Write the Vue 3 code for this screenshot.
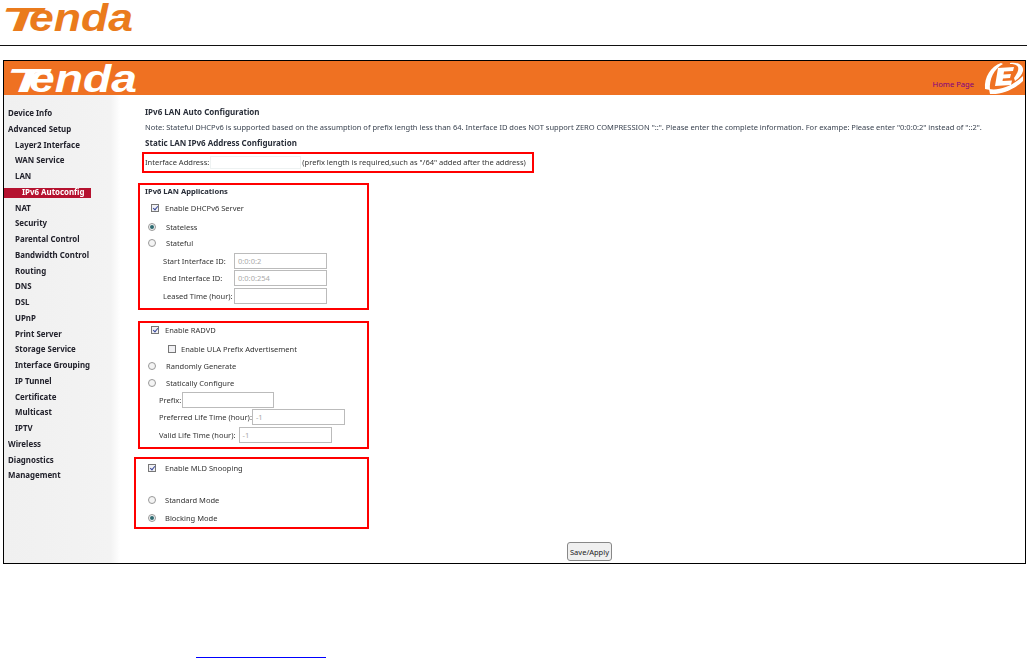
<script setup>
const navItems = [
  { label: 'Device Info', level: 0 },
  { label: 'Advanced Setup', level: 0 },
  { label: 'Layer2 Interface', level: 1 },
  { label: 'WAN Service', level: 1 },
  { label: 'LAN', level: 1 },
  { label: 'IPv6 Autoconfig', level: 2, active: true },
  { label: 'NAT', level: 1 },
  { label: 'Security', level: 1 },
  { label: 'Parental Control', level: 1 },
  { label: 'Bandwidth Control', level: 1 },
  { label: 'Routing', level: 1 },
  { label: 'DNS', level: 1 },
  { label: 'DSL', level: 1 },
  { label: 'UPnP', level: 1 },
  { label: 'Print Server', level: 1 },
  { label: 'Storage Service', level: 1 },
  { label: 'Interface Grouping', level: 1 },
  { label: 'IP Tunnel', level: 1 },
  { label: 'Certificate', level: 1 },
  { label: 'Multicast', level: 1 },
  { label: 'IPTV', level: 1 },
  { label: 'Wireless', level: 0 },
  { label: 'Diagnostics', level: 0 },
  { label: 'Management', level: 0 }
]
</script>

<template>
  <div class="page">
    <header class="doc-head">
      <svg class="logo" width="136" height="34" viewBox="0 0 136 34">
        <text class="logo-text" y="31" fill="#ea7b1c"><tspan x="1" font-size="33" textLength="40" lengthAdjust="spacingAndGlyphs">T</tspan><tspan x="29" font-size="39" textLength="104" lengthAdjust="spacingAndGlyphs">enda</tspan></text>
      </svg>
    </header>

    <section class="frame">
      <div class="banner">
        <svg class="logo" width="136" height="34" viewBox="0 0 136 34">
          <text class="logo-text" y="31" fill="#fff"><tspan x="2" font-size="33" textLength="41" lengthAdjust="spacingAndGlyphs">T</tspan><tspan x="25" font-size="38" textLength="108" lengthAdjust="spacingAndGlyphs">enda</tspan></text>
        </svg>
        <a class="home">Home Page</a>
        <svg class="e-logo" width="42" height="34" viewBox="0 0 42 34">
          <path d="M18 2 C8 5 1 16 2 28 L7 29 C6 18 11 8 20 3 Z" fill="#fff" />
          <path d="M27 2 C35 1 41 4 40 10 C39 14 35 18 32 20 L31 17 C34 13 36 9 35 6 C33 3 30 3 27 3 Z" fill="#fff" />
          <path d="M15 7 L31 6 L30 10 L21 10.5 L20.5 13.5 L28 13 L27 17 L20 17.5 L19.5 20 L29 19.5 L28 24 L12 25 Z" fill="#fff" />
          <path d="M6 28 C16 30 30 25 40 15 L40 20 C32 28 18 34 7 33 Z" fill="#fff" />
        </svg>
      </div>

      <div class="body">
        <nav class="side">
          <div
            v-for="item in navItems"
            :key="item.label"
            class="nav-item"
            :class="['lvl' + item.level, { active: item.active }]"
          >{{ item.label }}</div>
        </nav>

        <main class="main">
          <div class="line title">IPv6 LAN Auto Configuration</div>
          <div class="line note">Note: Stateful DHCPv6 is supported based on the assumption of prefix length less than 64. Interface ID does NOT support ZERO COMPRESSION "::". Please enter the complete information. For exampe: Please enter "0:0:0:2" instead of "::2".</div>
          <div class="line title">Static LAN IPv6 Address Configuration</div>

          <div class="red box-addr">
            <span class="soft">Interface Address:</span>
            <span class="field field-addr"></span>
            <span class="soft">(prefix length is required,such as "/64" added after the address)</span>
          </div>

          <div class="red box-apps">
            <div class="title apps-title soft">IPv6 LAN Applications</div>
            <div class="opt opt-check"><span class="check on"></span><span class="soft">Enable DHCPv6 Server</span></div>
            <div class="opt opt-radio r1"><span class="radio on"></span><span class="soft">Stateless</span></div>
            <div class="opt opt-radio r2"><span class="radio"></span><span class="soft">Stateful</span></div>
            <div class="frow fa first-row"><label class="l-apps soft">Start Interface ID:</label><span class="field f92 muted">0:0:0:2</span></div>
            <div class="frow fa"><label class="l-apps soft">End Interface ID:</label><span class="field f92 muted">0:0:0:254</span></div>
            <div class="frow fa"><label class="l-apps soft">Leased Time (hour):</label><span class="field f92"></span></div>
          </div>

          <div class="red box-radvd">
            <div class="opt opt-check first"><span class="check on"></span><span class="soft">Enable RADVD</span></div>
            <div class="opt opt-sub"><span class="check"></span><span class="soft">Enable ULA Prefix Advertisement</span></div>
            <div class="opt opt-radio r3"><span class="radio"></span><span class="soft">Randomly Generate</span></div>
            <div class="opt opt-radio r3"><span class="radio"></span><span class="soft">Statically Configure</span></div>
            <div class="frow fb first-b"><label class="soft">Prefix:</label><span class="field f91"></span></div>
            <div class="frow fb"><label class="soft l-pref">Preferred Life Time (hour):</label><span class="field f92 muted">-1</span></div>
            <div class="frow fb"><label class="soft l-valid">Valid Life Time (hour):</label><span class="field f92 muted">-1</span></div>
          </div>

          <div class="red box-mld">
            <div class="opt mld-check"><span class="check on"></span><span class="soft">Enable MLD Snooping</span></div>
            <div class="opt mld-radio m1"><span class="radio"></span><span class="soft">Standard Mode</span></div>
            <div class="opt mld-radio m2"><span class="radio on"></span><span class="soft">Blocking Mode</span></div>
          </div>

          <div class="actions"><button class="save" type="button">Save/Apply</button></div>
        </main>
      </div>
    </section>

    <div class="foot-rule"></div>
  </div>
</template>

<style>
html, body { margin: 0; background: #fff; overflow: hidden; }
</style>

<style scoped>
.page {
  width: 1027px;
  height: 658px;
  overflow: hidden;
  font-family: "Noto Sans", "DejaVu Sans", sans-serif;
  font-size: 7.52px;
  color: #333;
}
.soft, .line, .side { filter: blur(0.3px); }
.doc-head {
  height: 45px;
  border-bottom: 1px solid #111;
}
.logo {
  display: block;
  overflow: visible;
}
.logo-text {
  font-family: "Liberation Sans", sans-serif;
  font-style: italic;
  font-weight: 700;
}
.frame {
  margin: 14px 1px 0 3px;
  border: 1px solid #000;
  height: 502px;
  display: flex;
  flex-direction: column;
  overflow: hidden;
}
.banner {
  height: 34px;
  flex: none;
  background: #ef7122;
  position: relative;
}
.home {
  position: absolute;
  right: 51px;
  top: 18px;
  color: #800080;
  font-size: 7.6px;
}
.e-logo {
  position: absolute;
  right: 0;
  top: 0;
}
.body {
  flex: 1;
  display: flex;
  min-height: 0;
}
.side {
  width: 116px;
  flex: none;
  padding-top: 11px;
  background: linear-gradient(90deg, #f0f0f0 0, #f3f3f3 92%, #fff 100%);
  font-weight: 700;
  font-size: 7.9px;
  color: #22222c;
}
.nav-item {
  height: 15.75px;
  line-height: 15.75px;
  white-space: nowrap;
}
.lvl0 { padding-left: 4px; }
.lvl1 { padding-left: 11px; }
.lvl2 { padding-left: 18px; }
.active { position: relative; color: #fff; z-index: 0; }
.active::before {
  content: "";
  position: absolute;
  left: 0;
  top: 3px;
  width: 87px;
  height: 10px;
  background: #b5122f;
  z-index: -1;
}
.main {
  flex: 1;
  min-width: 0;
  padding: 9px 0 0 25px;
  position: relative;
}
.line {
  height: 15.5px;
  line-height: 15.5px;
  white-space: nowrap;
}
.title { font-weight: 700; font-size: 8px; color: #2a2f3a; }
.note { color: #3a4350; }
.red {
  border: 2px solid #f00;
  box-sizing: border-box;
}
.box-addr {
  width: 392px;
  height: 21px;
  margin: 1px 0 0 -3px;
  padding-left: 1px;
  display: flex;
  align-items: center;
  white-space: nowrap;
}
.field {
  display: inline-block;
  box-sizing: border-box;
  height: 16px;
  line-height: 14px;
  border: 1px solid #bbb;
  padding-left: 3px;
  background: #fff;
}
.muted { color: #aaa; }
.field-addr {
  width: 91px;
  height: 13px;
  margin: 0 1px 0 1px;
  border-color: #eef2f2;
}
.box-apps {
  width: 231px;
  height: 127px;
  margin: 10px 0 0 -7px;
  padding: 0 0 0 5px;
}
.apps-title { height: 12px; line-height: 12px; font-size: 7.6px; }
.opt {
  display: flex;
  align-items: center;
  white-space: nowrap;
}
.opt-check { height: 12px; margin: 5px 0 0 6px; }
.opt-check.first { margin-top: 0; }
.opt-radio { height: 12px; padding-left: 3px; }
.r1 { margin-top: 7px; }
.r2 { margin-top: 4px; }
.r3 { margin-top: 5px; }
.opt-sub { height: 12px; margin: 7px 0 0 23px; }
.check {
  width: 8px;
  height: 8px;
  box-sizing: border-box;
  border: 1px solid #777;
  background: #f1f1f4;
  margin-right: 6px;
  flex: none;
  position: relative;
}
.opt-sub .check { margin-right: 5px; }
.check.on::after {
  content: "";
  position: absolute;
  left: 1.5px;
  top: 0;
  width: 2px;
  height: 4px;
  border: solid #3a4a9a;
  border-width: 0 1.2px 1.2px 0;
  transform: rotate(40deg);
}
.radio {
  width: 8px;
  height: 8px;
  box-sizing: border-box;
  border: 1px solid #999;
  border-radius: 50%;
  background: #f4f4f4;
  margin-right: 10px;
  flex: none;
  position: relative;
}
.radio.on::after {
  content: "";
  position: absolute;
  left: 1px;
  top: 1px;
  width: 4px;
  height: 4px;
  border-radius: 50%;
  background: #2e6a70;
}
.frow {
  display: flex;
  align-items: center;
  white-space: nowrap;
}
.fa { height: 17px; padding-left: 18px; margin-top: 0.5px; }
.first-row { margin-top: 3.5px; }
.frow .l-apps { width: 71px; flex: none; margin-right: 0; }
.f92 { width: 93px; }
.f91 { width: 92px; }
.frow label { margin-right: 1px; }
.frow .l-pref { margin-right: 0; }
.frow .l-valid { margin-right: 3px; }
.box-radvd {
  width: 231px;
  height: 128px;
  margin: 11px 0 0 -7px;
  padding: 1px 0 0 5px;
}
.fb { height: 17px; padding-left: 14px; margin-top: 0.5px; }
.first-b { margin-top: 2.5px; }
.box-mld {
  width: 235px;
  height: 72px;
  margin: 8px 0 0 -11px;
  padding: 3px 0 0 12px;
}
.mld-check { height: 12px; }
.mld-radio { height: 12px; }
.m1 { margin-top: 20.5px; }
.m2 { margin-top: 5.5px; }
.mld-check .check { margin-right: 9px; }
.mld-radio .radio { margin-right: 9px; }
.actions {
  position: absolute;
  left: 447px;
  top: 447px;
}
.save {
  width: 45px;
  height: 19px;
  padding: 0;
  font: inherit;
  font-weight: 400;
  color: #222;
  background: #f0f0f0;
  border: 1px solid #888;
  border-radius: 3px;
}
.foot-rule {
  width: 130px;
  height: 1px;
  margin: 93px 0 0 196px;
  background: #00f;
}
</style>
